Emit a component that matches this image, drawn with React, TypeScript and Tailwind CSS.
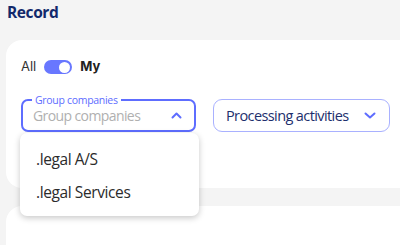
import React from "react";

export default function App() {
  return (
    <div className="w-[400px] h-[245px] overflow-hidden bg-[#f4f4f4] font-['Open_Sans',sans-serif]">
      <div className="pl-[7px] pt-[1px] h-[40px] text-[15.5px] font-bold tracking-[-0.4px] text-[#12296b] leading-[22px]">Record</div>
      <div className="ml-[6px] h-[148px] w-[420px] rounded-[16px] bg-white pl-[15px] pt-[20px] relative">
        <div className="flex items-center h-[14px] font-['Inter',sans-serif] text-[13px] text-[#333]">
          <span>All</span>
          <div className="ml-[8px] w-[28px] h-[14px] rounded-full bg-[#6877ff] flex items-center justify-end pr-[2px]">
            <div className="w-[11px] h-[11px] rounded-full bg-white" />
          </div>
          <span className="ml-[8px] font-bold text-[#222]">My</span>
        </div>
        <div className="flex mt-[25px] gap-[17px]">
          <div className="relative w-[175px] h-[33px] rounded-[7px] border-2 border-[#5e6dff] flex items-center justify-between pl-[10px] pr-[12px]">
            <span className="absolute -top-[8px] left-[9px] bg-white px-[3px] text-[10.5px] tracking-[-0.3px] leading-[14px] text-[#5e6dff] whitespace-nowrap">Group companies</span>
            <span className="text-[14px] tracking-[-0.6px] text-[#b0b0b0] whitespace-nowrap">Group companies</span>
            <svg width="11" height="7" viewBox="0 0 11 7" fill="none">
              <path d="M1.5 5.5L5.5 1.5L9.5 5.5" stroke="#5e6dff" strokeWidth="2" strokeLinecap="round" strokeLinejoin="round" />
            </svg>
            <div className="absolute left-[-3px] top-[32px] w-[179px] h-[83px] rounded-[7px] bg-white shadow-[0_2px_6px_rgba(0,0,0,0.22)] z-10 flex flex-col pt-[10px] pl-[16px] text-[15.5px] tracking-[-0.4px] text-[#2b2b2b]">
              <div className="h-[33px] flex items-center whitespace-nowrap">.legal A/S</div>
              <div className="h-[33px] flex items-center whitespace-nowrap">.legal Services</div>
            </div>
          </div>
          <div className="w-[177px] h-[33px] rounded-[9px] border border-[#a9b1ff] flex items-center justify-between pl-[12px] pr-[13px]">
            <span className="text-[14.5px] tracking-[-0.6px] text-[#1d2f6d] whitespace-nowrap">Processing activities</span>
            <svg width="12" height="7" viewBox="0 0 12 7" fill="none">
              <path d="M1.5 1.5L6 5.5L10.5 1.5" stroke="#5e6dff" strokeWidth="2" strokeLinecap="round" strokeLinejoin="round" />
            </svg>
          </div>
        </div>
      </div>
      <div className="ml-[6px] mt-[18px] h-[60px] w-[420px] rounded-[16px] bg-white" />
    </div>
  );
}
